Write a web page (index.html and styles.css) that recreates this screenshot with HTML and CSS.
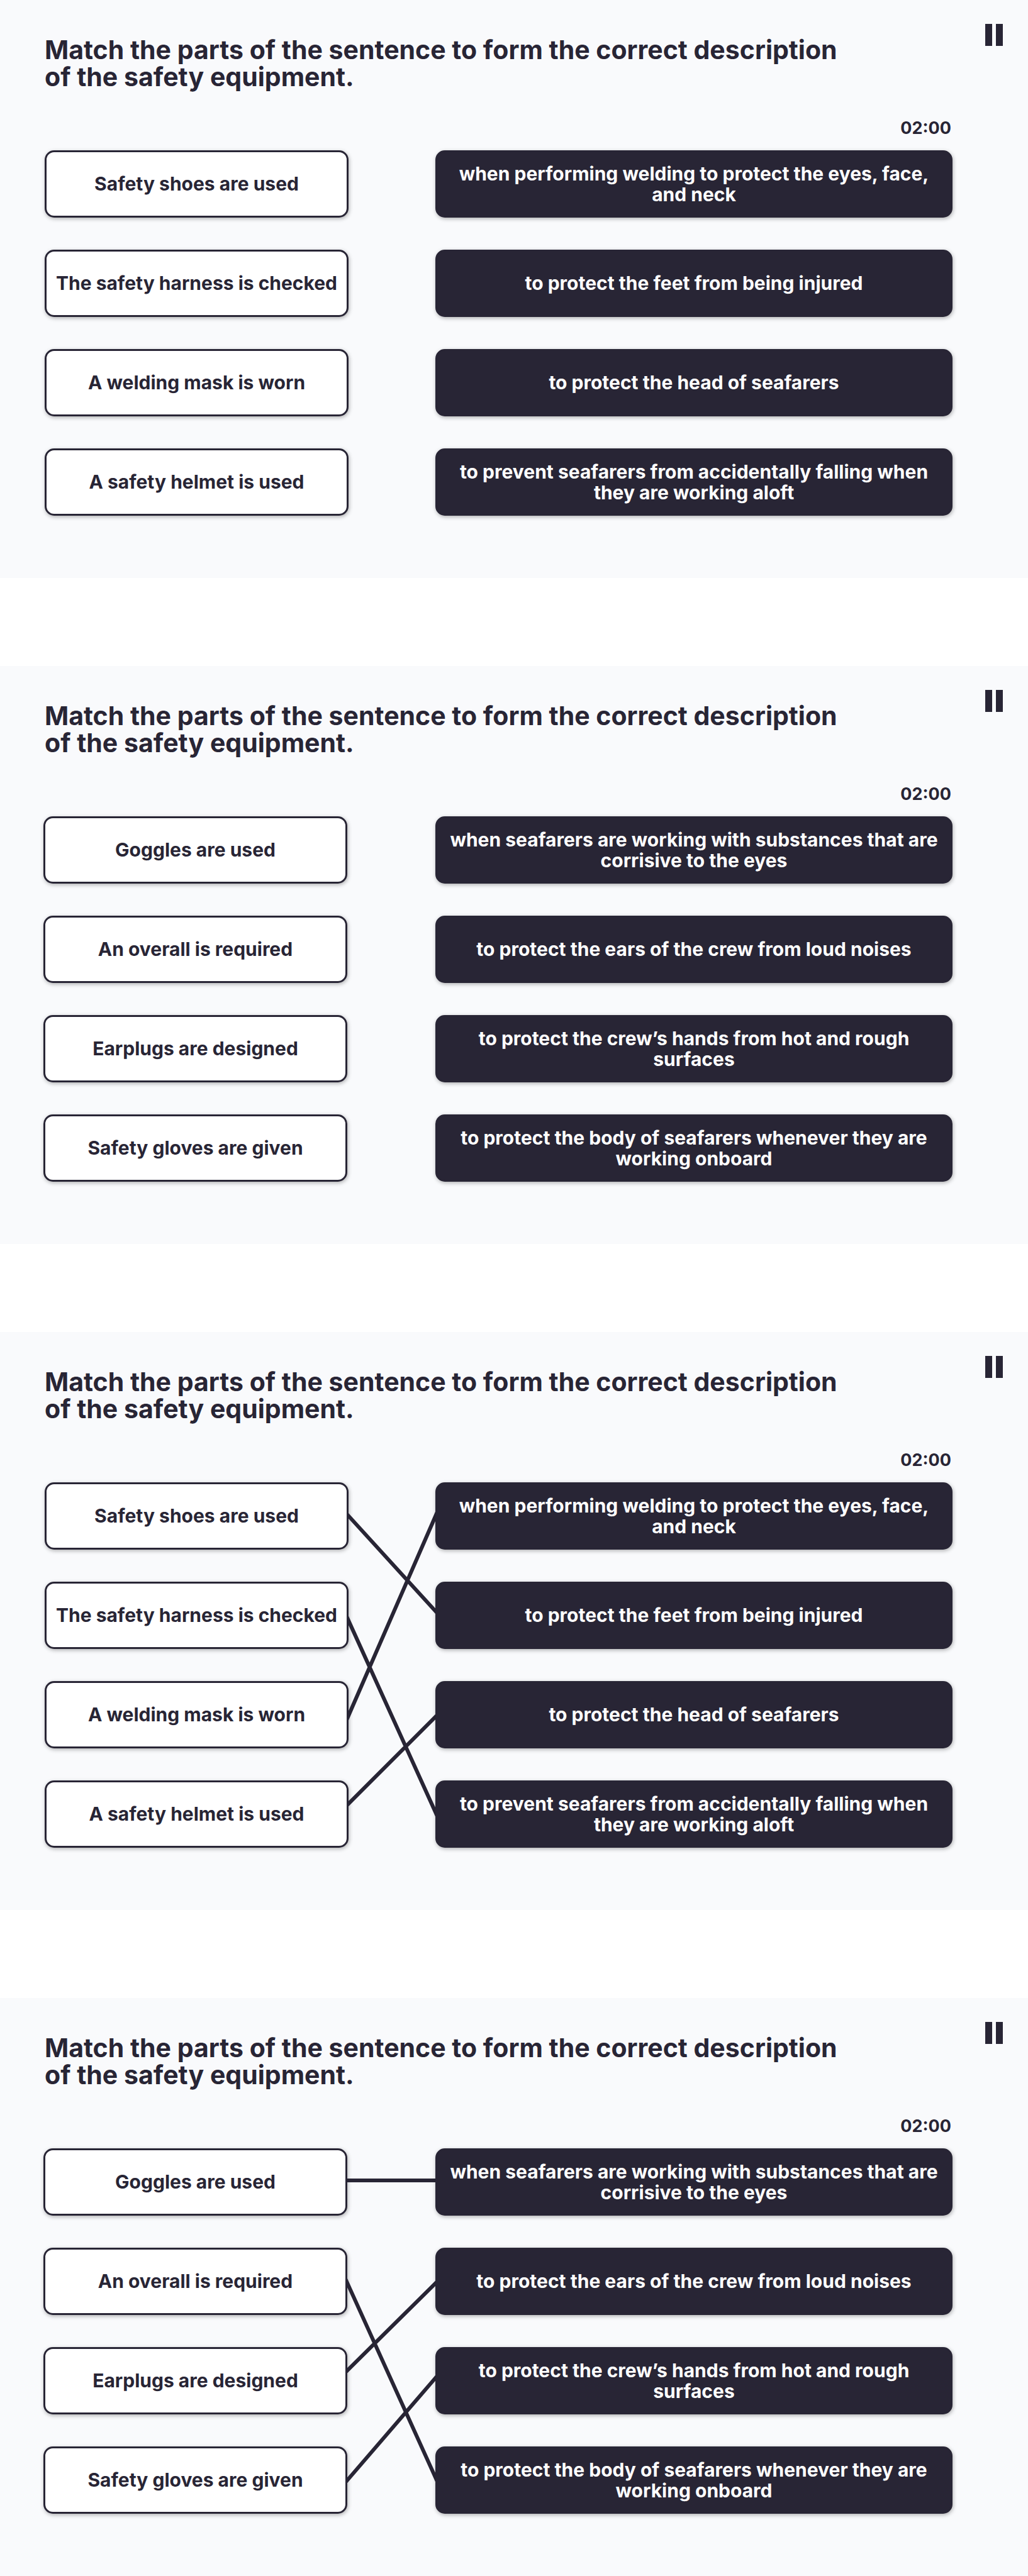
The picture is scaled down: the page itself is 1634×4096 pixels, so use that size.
FILE: index.html
```html
<!DOCTYPE html>
<html lang="en">
<head>
<meta charset="utf-8">
<meta name="viewport" content="width=device-width, initial-scale=1">
<title>Safety equipment matching</title>
<link rel="stylesheet" href="styles.css">
</head>
<body>
<main class="screens">
  <section class="panel">
    <header class="panel-header">
      <h2 class="task">Match the parts of the sentence to form the correct description of the safety equipment.</h2>
      <button class="pause" type="button" aria-label="Pause"><svg viewBox="0 0 28 35" aria-hidden="true"><path d="M0 0h11v35H0zM17 0h11v35H17z"/></svg></button>
    </header>
    <div class="exercise">
      <time class="timer">02:00</time>
      <div class="board">
        <div class="column">
          <button class="card start" type="button">Safety shoes are used</button>
          <button class="card start" type="button">The safety harness is checked</button>
          <button class="card start" type="button">A welding mask is worn</button>
          <button class="card start" type="button">A safety helmet is used</button>
        </div>
        <div class="column ends">
          <button class="card end" type="button">when performing welding to protect the eyes, face, and neck</button>
          <button class="card end" type="button">to protect the feet from being injured</button>
          <button class="card end" type="button">to protect the head of seafarers</button>
          <button class="card end" type="button">to prevent seafarers from accidentally falling when they are working aloft</button>
        </div>
      </div>
    </div>
  </section>

  <section class="panel">
    <header class="panel-header">
      <h2 class="task">Match the parts of the sentence to form the correct description of the safety equipment.</h2>
      <button class="pause" type="button" aria-label="Pause"><svg viewBox="0 0 28 35" aria-hidden="true"><path d="M0 0h11v35H0zM17 0h11v35H17z"/></svg></button>
    </header>
    <div class="exercise">
      <time class="timer">02:00</time>
      <div class="board board-wide">
        <div class="column">
          <button class="card start" type="button">Goggles are used</button>
          <button class="card start" type="button">An overall is required</button>
          <button class="card start" type="button">Earplugs are designed</button>
          <button class="card start" type="button">Safety gloves are given</button>
        </div>
        <div class="column ends">
          <button class="card end" type="button">when seafarers are working with substances that are corrisive to the eyes</button>
          <button class="card end" type="button">to protect the ears of the crew from loud noises</button>
          <button class="card end" type="button">to protect the crew’s hands from hot and rough surfaces</button>
          <button class="card end" type="button">to protect the body of seafarers whenever they are working onboard</button>
        </div>
      </div>
    </div>
  </section>

  <section class="panel">
    <header class="panel-header">
      <h2 class="task">Match the parts of the sentence to form the correct description of the safety equipment.</h2>
      <button class="pause" type="button" aria-label="Pause"><svg viewBox="0 0 28 35" aria-hidden="true"><path d="M0 0h11v35H0zM17 0h11v35H17z"/></svg></button>
    </header>
    <div class="exercise">
      <time class="timer">02:00</time>
      <div class="board">
        <div class="column">
          <button class="card start" type="button">Safety shoes are used</button>
          <button class="card start" type="button">The safety harness is checked</button>
          <button class="card start" type="button">A welding mask is worn</button>
          <button class="card start" type="button">A safety helmet is used</button>
        </div>
        <svg class="links" viewBox="0 0 138 581" preserveAspectRatio="none" aria-hidden="true">
          <path d="M-14 38L152 220M-14 189L152 555M-14 403L152 22M-14 525L152 359"/>
        </svg>
        <div class="column ends">
          <button class="card end" type="button">when performing welding to protect the eyes, face, and neck</button>
          <button class="card end" type="button">to protect the feet from being injured</button>
          <button class="card end" type="button">to protect the head of seafarers</button>
          <button class="card end" type="button">to prevent seafarers from accidentally falling when they are working aloft</button>
        </div>
      </div>
    </div>
  </section>

  <section class="panel">
    <header class="panel-header">
      <h2 class="task">Match the parts of the sentence to form the correct description of the safety equipment.</h2>
      <button class="pause" type="button" aria-label="Pause"><svg viewBox="0 0 28 35" aria-hidden="true"><path d="M0 0h11v35H0zM17 0h11v35H17z"/></svg></button>
    </header>
    <div class="exercise">
      <time class="timer">02:00</time>
      <div class="board board-wide">
        <div class="column">
          <button class="card start" type="button">Goggles are used</button>
          <button class="card start" type="button">An overall is required</button>
          <button class="card start" type="button">Earplugs are designed</button>
          <button class="card start" type="button">Safety gloves are given</button>
        </div>
        <svg class="links" viewBox="0 0 140 581" preserveAspectRatio="none" aria-hidden="true">
          <path d="M-14 51L154 51M-14 183L154 554M-14 367L154 201M-14 544L154 349"/>
        </svg>
        <div class="column ends">
          <button class="card end" type="button">when seafarers are working with substances that are corrisive to the eyes</button>
          <button class="card end" type="button">to protect the ears of the crew from loud noises</button>
          <button class="card end" type="button">to protect the crew’s hands from hot and rough surfaces</button>
          <button class="card end" type="button">to protect the body of seafarers whenever they are working onboard</button>
        </div>
      </div>
    </div>
  </section>
</main>
</body>
</html>
```
FILE: styles.css
```css
:root {
  --ink: #282535;
  --panel: #f9fafc;
}

* {
  box-sizing: border-box;
}

body {
  margin: 0;
  background: #fff;
  color: var(--ink);
  font-family: Inter, "Liberation Sans", sans-serif;
  font-weight: 700;
}

.screens {
  display: flex;
  flex-direction: column;
  gap: 140px;
}

.panel {
  padding: 38px 40px 99px 71px;
  background: var(--panel);
}

.panel-header {
  display: flex;
  align-items: flex-start;
  justify-content: space-between;
}

.task {
  max-width: 1280px;
  margin: 0;
  padding-top: 20px;
  font-size: 41px;
  line-height: 43px;
}

.pause {
  flex: none;
  padding: 0;
  border: 0;
  background: none;
  cursor: pointer;
}

.pause svg {
  display: block;
  width: 28px;
  height: 35px;
  fill: var(--ink);
}

.exercise {
  display: flex;
  flex-direction: column;
  gap: 20px;
  padding: 45px 80px 0 0;
}

.timer {
  align-self: flex-end;
  padding-right: 2px;
  font-size: 27px;
  line-height: 30px;
}

.board {
  display: grid;
  grid-template-columns: 483fr 138fr 822fr;
}

.board-wide {
  grid-template-columns: 483fr 140fr 822fr;
  margin-left: -2px;
}

.column {
  display: flex;
  flex-direction: column;
  gap: 51px;
}

.ends {
  grid-column: 3;
}

.card {
  min-height: 107px;
  border: 3px solid var(--ink);
  border-radius: 15px;
  box-shadow: 1px 2px 6px rgba(0, 0, 0, 0.3);
  color: var(--ink);
  font: inherit;
  font-size: 30px;
  line-height: 33px;
  cursor: pointer;
}

.start {
  padding: 8px;
  background: #fff;
}

.end {
  padding: 8px 15px;
  background: var(--ink);
  color: #fff;
}

.links {
  grid-column: 2;
  grid-row: 1;
  width: 100%;
  height: 100%;
  overflow: hidden;
  fill: none;
  stroke: var(--ink);
  stroke-width: 6px;
}

.links + .ends {
  grid-row: 1;
}
```
